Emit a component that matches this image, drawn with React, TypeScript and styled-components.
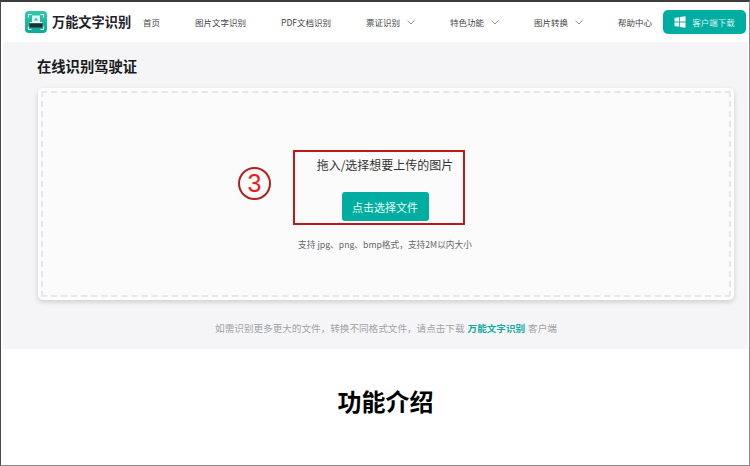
import React from "react";
import styled, { createGlobalStyle } from "styled-components";

const Global = createGlobalStyle`
  html, body { margin: 0; padding: 0; background: #fff; }
  body { font-family: "Noto Sans CJK SC", "Liberation Sans", sans-serif; }
`;

const Frame = styled.div`
  position: relative;
  width: 750px;
  height: 466px;
  box-sizing: border-box;
  overflow: hidden;
  background: #fff;
  border-top: 2px solid #3c3c3c;
  border-left: 1px solid #4a4a4a;
  border-right: 1px solid #8a8a8a;
  border-bottom: 1px solid #8a8a8a;
`;

const Header = styled.header`
  display: flex;
  align-items: center;
  height: 40px;
  background: #fff;
`;

const Logo = styled.div`
  display: flex;
  align-items: center;
  gap: 5px;
  margin-left: 24px;
  width: 118px;
  flex: none;
`;

const LogoText = styled.span`
  font-size: 13.2px;
  font-weight: 700;
  color: #1d2129;
  white-space: nowrap;
  line-height: 22px;
`;

const Nav = styled.nav`
  display: flex;
  align-items: center;
  gap: 35px;
`;

const NavItem = styled.a`
  display: flex;
  align-items: center;
  gap: 7px;
  font-size: 8.5px;
  color: #444;
  white-space: nowrap;
`;

const DownloadButton = styled.button`
  display: flex;
  align-items: center;
  justify-content: center;
  gap: 6px;
  margin-left: 11px;
  width: 83px;
  height: 24px;
  padding: 0;
  border: none;
  border-radius: 5px;
  background: #00ada1;
  color: #d9f3f0;
  font-family: inherit;
  font-size: 8.5px;
  white-space: nowrap;
`;

const Stage = styled.section`
  display: flex;
  flex-direction: column;
  height: 307px;
  margin: 0 1px 0 2px;
  padding: 0 13px 0 34px;
  box-sizing: border-box;
  background: #f5f5f8;
`;

const Title = styled.h1`
  margin: 14px 0 0;
  font-size: 14.3px;
  line-height: 20px;
  font-weight: 700;
  color: #1a1a1a;
`;

const DropZone = styled.div`
  display: flex;
  flex-direction: column;
  align-items: center;
  margin: 12px 0 0 1px;
  width: 696px;
  height: 212px;
  padding: 3px;
  box-sizing: border-box;
  border-radius: 5px;
  background: #fdfdfd;
  box-shadow: 0 2px 5px rgba(0, 0, 0, 0.17);
`;

const DropInner = styled.div`
  display: flex;
  flex-direction: column;
  align-items: center;
  width: 100%;
  height: 100%;
  padding-right: 2px;
  box-sizing: border-box;
  border: 2px dashed #e6e6e9;
  border-radius: 2px;
  background: #fbfbfc;
`;

const DropTitle = styled.div`
  margin-top: 63px;
  font-size: 12px;
  line-height: 18px;
  color: #333;
`;

const PickButton = styled.button`
  margin-top: 18px;
  width: 87px;
  height: 29px;
  padding: 0;
  border: none;
  border-radius: 3px;
  background: #00ada1;
  color: #eafaf8;
  font-family: inherit;
  font-size: 11px;
`;

const Hint = styled.div`
  margin-top: 18px;
  font-size: 8.7px;
  line-height: 12px;
  color: #666;
`;

const Footnote = styled.p`
  margin: 21px 0 0;
  text-align: center;
  font-size: 9.6px;
  line-height: 14px;
  color: #a2a2a2;
`;

const Brand = styled.strong`
  color: #12ab9f;
  font-weight: 700;
  margin: 0 3px;
`;

const Intro = styled.h2`
  margin: 34px 0 0 21px;
  text-align: center;
  font-size: 24px;
  line-height: 36px;
  font-weight: 700;
  color: #000;
`;

const Callout = styled.div`
  position: absolute;
  left: 292px;
  top: 148px;
  width: 172px;
  height: 75px;
  box-sizing: border-box;
  border: 2px solid #c01818;
`;

const StepMark = styled.div`
  position: absolute;
  left: 237px;
  top: 165px;
  width: 33px;
  height: 33px;
  box-sizing: border-box;
  display: flex;
  align-items: center;
  justify-content: center;
  border: 2px solid #b3201c;
  border-radius: 50%;
  color: #ee1c1c;
  font-family: "Liberation Sans", sans-serif;
  font-size: 25px;
  line-height: 1;
`;

const Chevron = () => (
  <svg width="8" height="5" viewBox="0 0 8 5" fill="none" stroke="#777" strokeWidth="0.8">
    <path d="M0.5 0.5 L4 4 L7.5 0.5" />
  </svg>
);

const LogoMark = () => (
  <svg width="22" height="22" viewBox="0 0 22 22">
    <defs>
      <linearGradient id="lg" x1="0" y1="0" x2="0" y2="1">
        <stop offset="0" stopColor="#2fc9a9" />
        <stop offset="1" stopColor="#0aa99b" />
      </linearGradient>
    </defs>
    <rect width="22" height="22" rx="4" fill="url(#lg)" />
    <path d="M3.5 6.5V3.5H6.5M15.5 3.5H18.5V6.5M3.5 15.5V18.5H6.5M15.5 18.5H18.5V15.5" fill="none" stroke="#e8fbf6" strokeWidth="1.1" />
    <rect x="7" y="4.5" width="8" height="6.5" fill="#e3f7f2" />
    <path d="M9 9.5 L11 6.5 L13 9.5Z" fill="#2fbfa5" />
    <rect x="4.5" y="11" width="13" height="5.5" rx="0.6" fill="#20302f" />
    <rect x="4.5" y="11" width="13" height="1.2" fill="#eafaf6" />
  </svg>
);

const WindowsMark = () => (
  <svg width="12" height="12" viewBox="0 0 12 12" fill="#fff">
    <path d="M0.5 2 L5.2 1.2 V5.6 H0.5Z" />
    <path d="M6 1.05 L11.5 0.2 V5.6 H6Z" />
    <path d="M0.5 6.4 H5.2 V10.8 L0.5 10Z" />
    <path d="M6 6.4 H11.5 V11.8 L6 10.95Z" />
  </svg>
);

export default function App() {
  return (
    <>
      <Global />
      <Frame>
        <Header>
          <Logo>
            <LogoMark />
            <LogoText>万能文字识别</LogoText>
          </Logo>
          <Nav>
            <NavItem>首页</NavItem>
            <NavItem>图片文字识别</NavItem>
            <NavItem>PDF文档识别</NavItem>
            <NavItem>票证识别 <Chevron /></NavItem>
            <NavItem>特色功能 <Chevron /></NavItem>
            <NavItem>图片转换 <Chevron /></NavItem>
            <NavItem>帮助中心</NavItem>
          </Nav>
          <DownloadButton>
            <WindowsMark />
            客户端下载
          </DownloadButton>
        </Header>
        <Stage>
          <Title>在线识别驾驶证</Title>
          <DropZone>
            <DropInner>
              <DropTitle>拖入/选择想要上传的图片</DropTitle>
              <PickButton>点击选择文件</PickButton>
              <Hint>支持 jpg、png、bmp格式，支持2M以内大小</Hint>
            </DropInner>
          </DropZone>
          <Footnote>
            如需识别更多更大的文件，转换不同格式文件，请点击下载
            <Brand>万能文字识别</Brand>
            客户端
          </Footnote>
        </Stage>
        <Intro>功能介绍</Intro>
        <Callout />
        <StepMark>3</StepMark>
      </Frame>
    </>
  );
}
